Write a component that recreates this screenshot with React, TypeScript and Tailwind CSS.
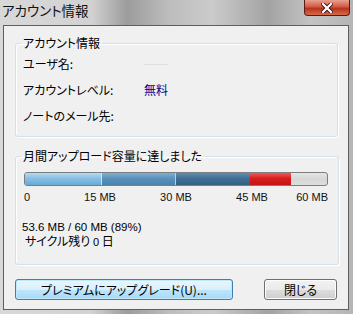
import React from 'react';

const jp = "font-['Noto_Sans_CJK_JP',sans-serif] [font-feature-settings:'palt']";
const latin = "font-['Liberation_Sans','Noto_Sans_CJK_JP',sans-serif]";

interface Segment {
  width: number;
  className: string;
}

const segments: Segment[] = [
  { width: 76, className: 'bg-[linear-gradient(#b4dbf3,#86bfe4_45%,#6aaad6)]' },
  { width: 74, className: 'bg-[linear-gradient(#7fb0d2,#5a92bb_45%,#4a82ab)] border-l border-[#cfe3f0]' },
  { width: 75, className: 'bg-[linear-gradient(#5e8fb3,#3f6f94_45%,#33617f)] border-l border-[#b9cfdf]' },
  { width: 41, className: 'bg-[linear-gradient(#ee5a5a,#d81d1d_45%,#c41414)]' },
];

const AccountDialog: React.FC = () => {
  return (
    <div className="relative w-[353px] h-[314px] overflow-hidden bg-[linear-gradient(90deg,#d8d8d8_0%,#d2d2d2_26%,#9c9c9c_36%,#bdbdbd_48%,#cbcbcb_60%,#a3a3a3_76%,#c3c3c3_88%,#b5b5b5_100%)]">
      {/* Title bar */}
      <div className={`h-[25px] pl-[2px] pt-[2px] text-[13.5px] leading-[16px] text-[#111] ${jp}`}>
        アカウント情報
      </div>

      {/* Close button */}
      <div className="absolute top-0 right-[3px] w-[46px] h-[16px] rounded-b-[4px] border border-t-0 border-[#5a1a14] bg-[linear-gradient(#e8a090,#d35a44_45%,#b8321e_55%,#d66a48)] flex items-center justify-center">
        <svg width="12" height="10" viewBox="0 0 12 10">
          <path d="M2 1 L10 9 M10 1 L2 9" stroke="#3a1410" strokeWidth="4" strokeLinecap="square" />
          <path d="M2 1 L10 9 M10 1 L2 9" stroke="#ffffff" strokeWidth="2.2" strokeLinecap="square" />
        </svg>
      </div>

      {/* Client area */}
      <div className={`mx-[3px] mr-[4px] border border-[#5e5e5e] bg-[#f0f0f0] pt-[9px] pb-[9px] text-[12px] text-black ${jp}`}>
        {/* Account info group */}
        <fieldset className="ml-[11px] mr-[10px] rounded-[3px] border border-[#d5dfe5] shadow-[inset_1px_1px_0_#ffffff,1px_1px_0_#ffffff] pb-[7px]">
          <legend className="ml-[5px] px-[2px] leading-[16px]">アカウント情報</legend>
          <div className="flex h-[26px] items-center pl-[7px]">
            <span className="w-[121px]">ユーザ名:</span>
            <span className="block w-[24px] h-px bg-[#dedede]" />
          </div>
          <div className="flex h-[26px] items-center pl-[7px]">
            <span className="w-[121px]">アカウントレベル:</span>
            <span className="text-[#00008f]">無料</span>
          </div>
          <div className="flex h-[26px] items-center pl-[7px]">
            <span className="w-[121px]">ノートのメール先:</span>
          </div>
        </fieldset>

        {/* Upload quota group */}
        <fieldset className="mt-[11px] ml-[11px] mr-[10px] rounded-[3px] border border-[#d5dfe5] shadow-[inset_1px_1px_0_#ffffff,1px_1px_0_#ffffff] pl-[8px] pr-[10px] pb-[15px]">
          <legend className="-ml-[3px] px-[2px] leading-[16px]">月間アップロード容量に達しました</legend>

          <div className="mt-[8px] flex w-[304px] h-[14px] overflow-hidden rounded-[3px] border border-[#7d7d7d] bg-[linear-gradient(#e6e6e6,#d6d6d6_50%,#dedede)]">
            {segments.map((s, i) => (
              <div key={i} className={`h-full ${s.className}`} style={{ width: s.width }} />
            ))}
          </div>

          <div className={`mt-[4px] grid w-[304px] grid-cols-8 text-[11px] leading-[14px] text-[#111] ${latin}`}>
            <span className="text-left">0</span>
            <span className="col-span-2 text-center">15 MB</span>
            <span className="col-span-2 text-center">30 MB</span>
            <span className="col-span-2 text-center">45 MB</span>
            <span className="text-right">60 MB</span>
          </div>

          <div className={`mt-[17px] -ml-[2px] text-[11.5px] leading-[13px] ${latin}`}>53.6 MB / 60 MB (89%)</div>
          <div className="leading-[13px] pl-[1px]">
            サイクル残り <span className={`text-[11px] ${latin}`}>0</span> 日
          </div>
        </fieldset>

        {/* Buttons */}
        <div className="mt-[14px] ml-[11px] mr-[11px] flex items-center justify-between">
          <button className="w-[218px] h-[21px] rounded-[3px] border border-[#3c7fb1] bg-[linear-gradient(#eaf6fd,#d9f0fc_50%,#bee6fd_51%,#a7d9f5)] shadow-[inset_0_0_0_1px_#bfe8fb] text-[12px] leading-[19px]">
            プレミアムにアップグレード(U)...
          </button>
          <button className="w-[73px] h-[21px] rounded-[3px] border border-[#707070] bg-[linear-gradient(#f2f2f2,#ebebeb_50%,#dddddd_51%,#cfcfcf)] shadow-[inset_0_0_0_1px_#fcfcfc] text-[12px] leading-[19px]">
            閉じる
          </button>
        </div>
      </div>
    </div>
  );
};

export default function App() {
  return <AccountDialog />;
}
